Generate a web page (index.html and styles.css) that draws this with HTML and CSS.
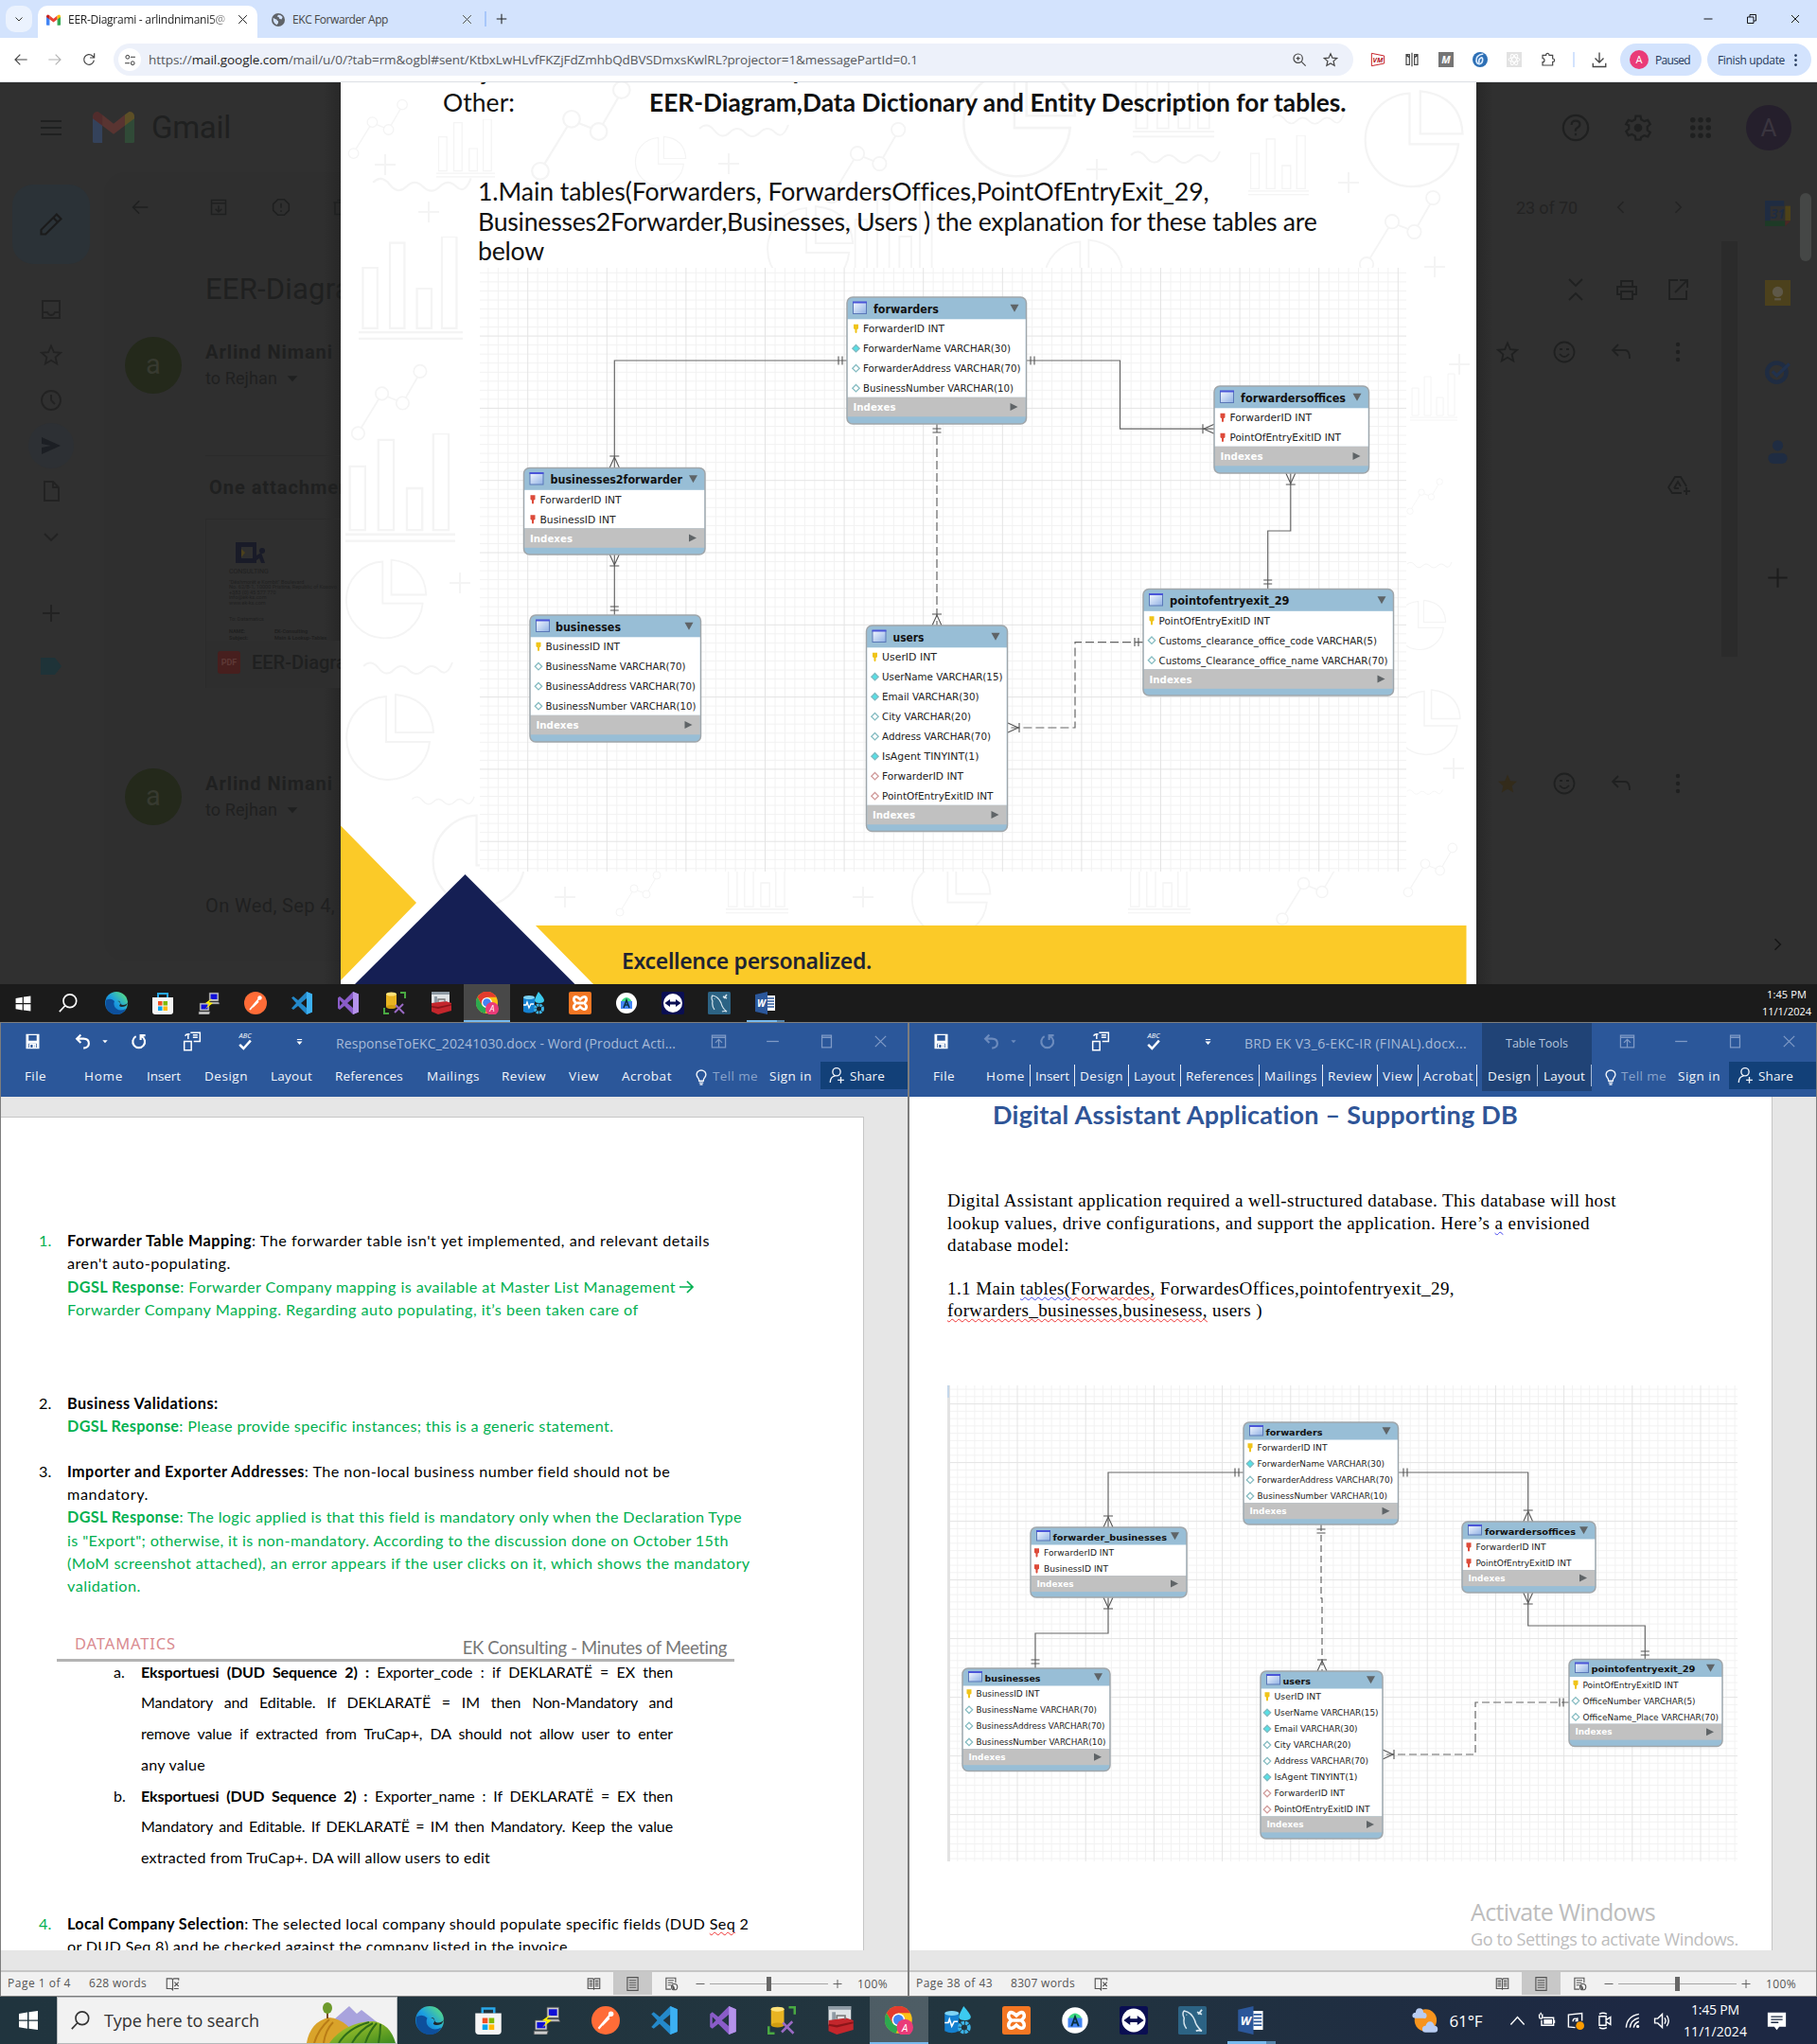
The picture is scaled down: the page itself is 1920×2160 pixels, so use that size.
FILE: index.html
```html
<!DOCTYPE html>
<html lang="en">
<head>
<meta charset="utf-8">
<title>Desktop</title>
<link rel="stylesheet" href="styles.css">
</head>
<body>
<svg class="grads" aria-hidden="true"><defs>
<linearGradient id="gEdge" x1="0" y1="1" x2="1" y2="0"><stop offset="0" stop-color="#0c59a4"/><stop offset=".5" stop-color="#1b9de2"/><stop offset="1" stop-color="#66eb6e"/></linearGradient>
<linearGradient id="gCell" x1="0" y1="0" x2="1" y2="1"><stop offset="0" stop-color="#f4f8ff"/><stop offset="1" stop-color="#8fb0e4"/></linearGradient>
<linearGradient id="gHill" x1="0" y1="0" x2="1" y2="1"><stop offset="0" stop-color="#b9cf2f"/><stop offset="1" stop-color="#3a8a1e"/></linearGradient>
</defs></svg>
<svg class="defs" aria-hidden="true">
<symbol id="gm" viewBox="0 0 24 18"><path fill="#4285f4" d="M0 2v15q0 1 1 1h4.500V7z"/><path fill="#34a853" d="M24 2v15q0 1-1 1h-4.500V7z"/><path fill="#ea4335" d="M5.500 8V1.800L12 7l6.500-5.200V8L12 13z"/><path fill="#c5221f" d="M0 3q0-3 3-3l2.500 1.800V8L0 4z"/><path fill="#fbbc04" d="M24 3q0-3-3-3l-2.500 1.800V8L24 4z"/></symbol>
<symbol id="x" viewBox="0 0 24 24"><path d="M4 4l16 16M20 4L4 20" class="l"/></symbol>
<symbol id="down" viewBox="0 0 24 24"><path d="M5 9l7 7 7-7" class="l"/></symbol>
<symbol id="up" viewBox="0 0 24 24"><path d="M3 17l9-10 9 10" class="l"/></symbol>
<symbol id="left" viewBox="0 0 24 24"><path d="M15 5l-7 7 7 7" class="l"/></symbol>
<symbol id="right" viewBox="0 0 24 24"><path d="M9 5l7 7-7 7" class="l"/></symbol>
<symbol id="plus" viewBox="0 0 24 24"><path d="M12 3v18M3 12h18" class="l"/></symbol>
<symbol id="minus" viewBox="0 0 24 24"><path d="M3 12h18" class="l"/></symbol>
<symbol id="globe" viewBox="0 0 24 24"><circle cx="12" cy="12" r="12" fill="#5f6368"/><path fill="#d3e3fd" d="M3 8q3 3 6 3 1 3 3 3v4q-2 1-2 3-6-2-7-8zM12 3q4-1 8 4l-2 4-4-1-1-3-3-1z"/></symbol>
<symbol id="restore" viewBox="0 0 24 24"><path d="M3 8h13v13H3zM8 8V3h13v13h-5" class="l"/></symbol>
<symbol id="back" viewBox="0 0 24 24"><path d="M22 12H3M11 4l-8 8 8 8" class="l"/></symbol>
<symbol id="fwd" viewBox="0 0 24 24"><path d="M2 12h19M13 4l8 8-8 8" class="l"/></symbol>
<symbol id="reload" viewBox="0 0 24 24"><path d="M20 13a8 8 0 1 1-2.500-7L20 8.500M20.500 2v7h-7" class="l"/></symbol>
<symbol id="tune" viewBox="0 0 24 24"><circle cx="7" cy="6" r="3.500" class="l"/><path d="M13 6h9M2 18h9" class="l"/><circle cx="17" cy="18" r="3.500" class="l"/></symbol>
<symbol id="mag" viewBox="0 0 24 24"><circle cx="10" cy="10" r="7" class="l"/><path d="M15.500 15.500L22 22M7 10h6M10 7v6" class="l"/></symbol>
<symbol id="star" viewBox="0 0 24 24"><path d="M12 2.500l2.900 6.700 7.100.6-5.400 4.700 1.600 7L12 17.800 5.800 21.500l1.600-7L2 9.800l7.100-.6z" class="l"/></symbol>
<symbol id="starf" viewBox="0 0 24 24"><path d="M12 2.500l2.900 6.700 7.100.6-5.400 4.700 1.600 7L12 17.800 5.800 21.500l1.600-7L2 9.800l7.100-.6z" fill="currentColor"/></symbol>
<symbol id="vm" viewBox="0 0 24 24"><path d="M2 2l20 4v12L2 22z" fill="#fff" stroke="#c8242b" stroke-width="1.500"/><text x="12" y="16" class="b" font-size="11" text-anchor="middle" fill="#b3141b">VM</text></symbol>
<symbol id="mirror" viewBox="0 0 24 24"><path d="M3 4h5v16H3zM16 4h5v16h-5zM12 1v22M3 4l5 5M21 4l-5 5" class="l"/></symbol>
<symbol id="mbox" viewBox="0 0 24 24"><path fill="#757575" d="M0 0h24v24H0z"/><text x="12" y="18" class="b" font-size="16" text-anchor="middle" fill="#fff">M</text></symbol>
<symbol id="swirl" viewBox="0 0 24 24"><circle cx="12" cy="12" r="12" fill="#2d6fb5"/><path d="M17 3q-12 2-11 11 1 5 5 5 5-1 5-7t-5-1q-2 4 0 6" fill="none" stroke="#dcecff" stroke-width="2.500"/></symbol>
<symbol id="react" viewBox="0 0 24 24"><path fill="#e2e2e2" d="M0 0h24v24H0z"/><g fill="none" stroke="#fff" stroke-width="1.500"><ellipse cx="12" cy="12" rx="9" ry="3.500"/><ellipse cx="12" cy="12" rx="9" ry="3.500" transform="rotate(60 12 12)"/><ellipse cx="12" cy="12" rx="9" ry="3.500" transform="rotate(120 12 12)"/></g></symbol>
<symbol id="puzzle" viewBox="0 0 24 24"><path d="M3 5h5.500q0-3 2.500-3t2.500 3H19v5.500q3 0 3 2.500t-3 2.500V21H3v-5q3 0 3-3t-3-3z" class="l"/></symbol>
<symbol id="dl" viewBox="0 0 24 24"><path d="M12 2v13M6 10l6 6 6-6M3 17v5h18v-5" class="l"/></symbol>
<symbol id="dots" viewBox="0 0 24 24"><g fill="currentColor"><circle cx="12" cy="4" r="2.200"/><circle cx="12" cy="12" r="2.200"/><circle cx="12" cy="20" r="2.200"/></g></symbol>
<symbol id="burger" viewBox="0 0 24 24"><path d="M1 5h22M1 12h22M1 19h22" class="l"/></symbol>
<symbol id="pencil" viewBox="0 0 24 24"><path d="M3 21v-4L17 3l4 4L7 21zM14 6l4 4" class="l"/></symbol>
<symbol id="archive" viewBox="0 0 24 24"><path d="M3 3h18v18H3zM3 7h18M12 10v8M8 14l4 4 4-4" class="l"/></symbol>
<symbol id="spam" viewBox="0 0 24 24"><path d="M8 2h8l6 6v8l-6 6H8l-6-6V8zM12 7v6M12 16v2" class="l"/></symbol>
<symbol id="trash" viewBox="0 0 24 24"><path d="M4 6h16M6 6v15h12V6M9 3h6" class="l"/></symbol>
<symbol id="inbox" viewBox="0 0 24 24"><path d="M3 3h18v18H3zM3 15h5q1 3 4 3t4-3h5" class="l"/></symbol>
<symbol id="clock" viewBox="0 0 24 24"><circle cx="12" cy="12" r="10" class="l"/><path d="M12 6v6l4 4" class="l"/></symbol>
<symbol id="send" viewBox="0 0 24 24"><path fill="currentColor" d="M2 3l20 9L2 21v-7l10-2-10-2z"/></symbol>
<symbol id="doc" viewBox="0 0 24 24"><path d="M5 2h9l6 6v14H5zM14 2v6h6" class="l"/></symbol>
<symbol id="label" viewBox="0 0 24 24"><path fill="currentColor" d="M1 3h15l7 9-7 9H1z"/></symbol>
<symbol id="help" viewBox="0 0 24 24"><circle cx="12" cy="12" r="10.500" class="l"/><path d="M8.500 9.500q0-3.500 3.500-3.500t3.500 3q0 2-2 3t-1.500 3M12 16.500v2" class="l"/></symbol>
<symbol id="gear" viewBox="0 0 24 24"><path d="M10 2h4l.6 3 2.600 1.500 3-1 2 3.500-2.400 2v3l2.400 2-2 3.500-3-1-2.600 1.500L14 22h-4l-.6-3-2.600-1.500-3 1-2-3.500 2.400-2v-3L1.800 9l2-3.500 3 1L9.400 5z" class="l"/><circle cx="12" cy="12" r="3.500" fill="currentColor"/></symbol>
<symbol id="apps" viewBox="0 0 24 24"><g fill="currentColor"><circle cx="3" cy="3" r="3"/><circle cx="12" cy="3" r="3"/><circle cx="21" cy="3" r="3"/><circle cx="3" cy="12" r="3"/><circle cx="12" cy="12" r="3"/><circle cx="21" cy="12" r="3"/><circle cx="3" cy="21" r="3"/><circle cx="12" cy="21" r="3"/><circle cx="21" cy="21" r="3"/></g></symbol>
<symbol id="collapse" viewBox="0 0 24 24"><path d="M5 1l7 7 7-7M5 23l7-7 7 7" class="l"/></symbol>
<symbol id="print" viewBox="0 0 24 24"><path d="M6 8V3h12v5M6 17H2V9h20v8h-4M6 14h12v8H6z" class="l"/></symbol>
<symbol id="open" viewBox="0 0 24 24"><path d="M12 2H3v20h18v-9M14 2h8v8M22 2L9 15" class="l"/></symbol>
<symbol id="smile" viewBox="0 0 24 24"><circle cx="12" cy="12" r="10.500" class="l"/><path d="M7 14q5 6 10 0M7 9h3M14 9h3" class="l"/></symbol>
<symbol id="reply" viewBox="0 0 24 24"><path d="M9 4L3 10l6 6M3 10h13q5 0 5 9" class="l"/></symbol>
<symbol id="drive" viewBox="0 0 24 24"><path d="M15 20H5l-4-6L8 3h6l6 10M7 15l4-7 3 5M7 15h5M17 18h7M20 14v8" class="l"/></symbol>
<symbol id="cal" viewBox="0 0 24 24"><path fill="#1f2c42" d="M0 0h18v5H5v14H0z"/><path fill="#4e4218" d="M19 5h5v14h-5z"/><path fill="#1d3a26" d="M0 19h19v5H0z"/><path fill="#4c2724" d="M19 19h5l-5 5z"/><text x="12" y="16.500" class="b" font-size="12" text-anchor="middle" fill="#1f2c42">31</text></symbol>
<symbol id="keep" viewBox="0 0 24 24"><path fill="#4c411c" d="M0 0h24v24H0z"/><circle cx="12" cy="11" r="5" fill="#5e5848"/><path fill="#5e5848" d="M9 17h6v2H9z"/></symbol>
<symbol id="tasks" viewBox="0 0 24 24"><circle cx="11" cy="12" r="9" fill="none" stroke="#1f2c42" stroke-width="4"/><path d="M7 11l4 4L23 4" fill="none" stroke="#21324e" stroke-width="3"/></symbol>
<symbol id="contacts" viewBox="0 0 24 24"><g fill="#1f2c42"><circle cx="12" cy="6" r="5"/><rect x="3" y="13" width="18" height="10" rx="5"/></g></symbol>
<symbol id="win" viewBox="0 0 24 24"><path fill="#fff" d="M2 5l9-1.500V11.500H2zM12.500 3.300L22 2v9.500h-9.500zM2 12.800h9v8L2 19.300zM12.500 12.800H22V22l-9.500-1.300z"/></symbol>
<symbol id="search" viewBox="0 0 24 24"><circle cx="14" cy="9.500" r="7.500" class="l"/><path d="M8.500 15L2 22" class="l"/></symbol>
<symbol id="edge" viewBox="0 0 24 24"><circle cx="12" cy="12" r="12" fill="url(#gEdge)"/><path fill="#0d4f9c" d="M1 9q-2 12 9 15 8 1 12-6-6 3-10 0-4-3-2-8-4-4-9-1z"/><path fill="#20262a" d="M13 10q3 0 3 3l-1 2q2 2 7 0 2-2 2-4-1 3-5 3-3 0-3-3-1-2-3-1z"/></symbol>
<symbol id="store" viewBox="0 0 24 24"><path d="M7 6V2h10v4" fill="none" stroke="#28a8ea" stroke-width="2"/><path fill="#f5f5f5" d="M1 6h22v15q0 3-3 3H4q-3 0-3-3z"/><path fill="#f25022" d="M7 10h4.500v4.500H7z"/><path fill="#7fba00" d="M12.500 10H17v4.500h-4.500z"/><path fill="#00a4ef" d="M7 15.500h4.500V20H7z"/><path fill="#ffb900" d="M12.500 15.500H17V20h-4.500z"/></symbol>
<symbol id="putty" viewBox="0 0 24 24"><g stroke="#555" stroke-width=".6"><path fill="#ccc" d="M12 1h10v9H12zM13 11h9l1 2H12zM2 12h10v8H2zM1 21h12l-1 3H1z"/></g><path fill="#1010d8" d="M13.500 2.500h7v5.500h-7zM3.500 13.500h7v5h-7z"/><path fill="#ffee00" d="M15 7l-7 5 4 1-4 5 8-6-4-1z"/></symbol>
<symbol id="postman" viewBox="0 0 24 24"><circle cx="12" cy="12" r="12" fill="#ff6c37"/><path d="M6 19l10-12M9 16l6-6" stroke="#fff" stroke-width="1.800" fill="none"/><circle cx="16.500" cy="6.500" r="2.200" fill="#fff"/></symbol>
<symbol id="vscode" viewBox="0 0 24 24"><path fill="#2489ca" d="M17 0l6 2.500v19L17 24l-9-9-5 4-2-1.500 5-5.500-5-5.500L3 5l5 4zM17 7l-6 5 6 5z"/><path fill="#3cb0f2" d="M17 0l6 2.500v19L17 24z"/></symbol>
<symbol id="vs" viewBox="0 0 24 24"><path fill="#8a5cc8" fill-rule="evenodd" d="M17 0l6 2.500v19L17 24 8 15l-5 4-2-1.500v-11L3 5l5 4zM17 7l-6 5 6 5zM3 9v6l3-3z"/><path fill="#b593ea" d="M17 0l6 2.500v19L17 24z"/></symbol>
<symbol id="sql" viewBox="0 0 24 24"><path fill="#e8b422" d="M3 2h11v14H3z"/><ellipse cx="8.500" cy="16" rx="5.500" ry="2" fill="#d19d10"/><ellipse cx="8.500" cy="2.500" rx="5.500" ry="2" fill="#ffe27a"/><path d="M18 1h5v6M1 17v6h5" fill="none" stroke="#49a942" stroke-width="2"/><path d="M12 22l9-9M13 14l9 9" stroke="#9a6ac4" stroke-width="2"/></symbol>
<symbol id="tbox" viewBox="0 0 24 24"><path fill="#dfe3e6" d="M2 0h19v16H2z"/><path fill="#8e9aa4" d="M2 0h19v3H2zM5 5h3v9H5z"/><path fill="#c4262c" d="M2 12l15-2 6 2v8l-14 4-7-3z"/><path fill="#8b1519" d="M2 15l7 1 14-3v1.500L9 18l-7-1.500z"/><path d="M9 11V8h7v3" fill="none" stroke="#777" stroke-width="1.300"/></symbol>
<symbol id="chrome" viewBox="0 0 24 24"><circle cx="11.500" cy="11.500" r="11.500" fill="#fbc116"/><path fill="#e33b2e" d="M1.500 5.700A11.500 11.500 0 0 1 21.500 5.700H11.500l-5 8.600z"/><path fill="#2da94f" d="M1.500 5.700L6.500 14.500l5 2.500-2 6A11.500 11.500 0 0 1 1.500 5.700z"/><circle cx="11.500" cy="11.500" r="5.500" fill="#fff"/><circle cx="11.500" cy="11.500" r="4.300" fill="#4285f4"/><circle cx="17" cy="18" r="7" fill="#ea3b78"/><text x="17" y="21.300" font-size="9" class="s" text-anchor="middle" fill="#fff">A</text></symbol>
<symbol id="azure" viewBox="0 0 24 24"><path fill="#1480d0" d="M1 6h12v15q-6 3-12 0z"/><ellipse cx="7" cy="6" rx="6" ry="2" fill="#7fd4f5"/><path fill="#3ccbf0" d="M17 0q6 7 6 9 0 3-5 3t-5-3q0-2 4-9z"/><path d="M1 14h3l1-3 2 6 2-4h3" stroke="#fff" fill="none" stroke-width="1.300"/><circle cx="17.500" cy="18" r="4" fill="none" stroke="#3cb4e8" stroke-width="3" stroke-dasharray="2.500 .7"/></symbol>
<symbol id="xampp" viewBox="0 0 24 24"><rect width="24" height="24" rx="2" fill="#f37623"/><path d="M12 8Q8 4 6 6q-2 3 2 6-4 3-2 6 2 2 6-2 4 4 6 2 2-3-2-6 4-3 2-6-2-2-6 2zM9 12h6" fill="none" stroke="#fff" stroke-width="2.800"/></symbol>
<symbol id="astudio" viewBox="0 0 24 24"><circle cx="12" cy="12" r="11" fill="#fff"/><path fill="#3ddc84" d="M7 9q5-6 10 0v4H7z"/><path fill="#4285f4" d="M6 10h12v8H6z"/><path d="M9 17l3-8 3 8M10 14h4" stroke="#083042" stroke-width="1.500" fill="none"/></symbol>
<symbol id="tv" viewBox="0 0 24 24"><rect width="24" height="24" rx="2" fill="#0a0e52"/><circle cx="12" cy="12" r="10" fill="#fff"/><path fill="#0a0e52" d="M3.500 12L9 8v2.500h6V8l5.500 4L15 16v-2.500H9V16z"/></symbol>
<symbol id="mysql" viewBox="0 0 24 24"><rect width="24" height="24" rx="1.500" fill="#2c6384"/><path d="M7 19Q4 15 5 10 3 6 5 4q6 1 9 8 1 5 6 9-3-1-5 0M7 7v.5" stroke="#d8e6ee" stroke-width="1.200" fill="none"/><path d="M17 7l3-4M20 7l-4-2" stroke="#d8e6ee" stroke-width="1.500"/></symbol>
<symbol id="word" viewBox="0 0 24 24"><path fill="#fff" d="M12 4h10v16H12z"/><path d="M14 7h7M14 10h7M14 13h7M14 16h7" stroke="#2b579a" stroke-width="1.400"/><path fill="#2b579a" d="M1 3l13-3v24L1 21z"/><text x="7.500" y="16" font-size="10" class="b" text-anchor="middle" fill="#fff">W</text></symbol>
<symbol id="save" viewBox="0 0 24 24"><path d="M3 2h18v20H3zM5 12h14M8 22v-6h8v6" class="l"/><path fill="currentColor" d="M3 12h18v3H3zM3 2h3v20H3zM18 2h3v20h-3zM12 17h3v5h-3z"/></symbol>
<symbol id="undo" viewBox="0 0 24 24"><path d="M9 2L3 8l6 6M3 8h10q8 0 8 7 0 6-8 7" class="l h"/></symbol>
<symbol id="redo" viewBox="0 0 24 24"><path d="M8 4.500A9 9 0 1 0 16.500 4.500M22 3h-7v7" class="l h"/></symbol>
<symbol id="tri" viewBox="0 0 24 24"><path fill="currentColor" d="M4 8h16l-8 9z"/></symbol>
<symbol id="trib" viewBox="0 0 24 24"><path fill="currentColor" d="M4 12h16l-8 9zM5 5h14v3H5z"/></symbol>
<symbol id="paint" viewBox="0 0 24 24"><path d="M2 12h9v11H2zM10 1h12v11h-8M13 4h6M13 7h6M3 5q2-3 6-2M7 4v5" class="l"/></symbol>
<symbol id="abc" viewBox="0 0 24 24"><text x="12" y="8" class="s" font-size="9" text-anchor="middle" fill="currentColor">ABC</text><path d="M5 16l5 5 9-10" fill="none" stroke="currentColor" stroke-width="3"/></symbol>
<symbol id="ribbon" viewBox="0 0 24 24"><path d="M2 3h20v18H2zM2 6h20M12 20V10M7 14l5-5 5 5" class="l"/></symbol>
<symbol id="max" viewBox="0 0 24 24"><path d="M5 3h14v18H5zM5 6h14" class="l"/></symbol>
<symbol id="bulb" viewBox="0 0 24 24"><path d="M9 17q0-3-2-5-3-4 0-8 5-4 10 0 3 4 0 8-2 2-2 5zM9 19.500h6M10 22h4" class="l"/></symbol>
<symbol id="person" viewBox="0 0 24 24"><circle cx="12" cy="7" r="5.500" class="l"/><path d="M3 22q0-8 7-9.500M18 14v9M13.500 18.500h9" class="l"/></symbol>
<symbol id="book" viewBox="0 0 24 24"><path d="M12 4v18l-2-2H2V3h8zM12 4l2-1h8v3M14 20h8M15 9l7 7M22 9l-7 7" class="l"/></symbol>
<symbol id="read" viewBox="0 0 24 24"><path d="M12 4v18M2 3h8l2 1 2-1h8v17H2zM4 7h6M4 10h6M4 13h6M4 16h6M14 7h6M14 10h6M14 13h6M14 16h6" class="l"/></symbol>
<symbol id="page" viewBox="0 0 24 24"><path d="M3 1h18v22H3zM6 6h12M6 10h12M6 14h12M6 18h12" class="l"/></symbol>
<symbol id="web" viewBox="0 0 24 24"><path d="M11 21H3V2h16v8M6 6h10M6 10h9M6 14h5" class="l"/><circle cx="17" cy="17" r="5" class="l"/><path fill="currentColor" d="M13 14q4 0 5 8-5 1-5-8z"/></symbol>
<symbol id="weather" viewBox="0 0 24 24"><circle cx="13" cy="12" r="10" fill="#f7941d"/><path fill="#b9cdf2" d="M1 8q0-3 3-3 0-4 3.500-4T11 5q3 0 3 3t-3 2H4Q1 10 1 8zM10 20q0-3 3-3 1-4 4-4t4 4q3 0 3 3t-3 3h-8q-3 0-3-3z"/></symbol>
<symbol id="plug" viewBox="0 0 24 24"><path d="M7 8h14v10H5v-7M2 3v4q0 2 2 2t2-2V3M4 1v3" class="l"/><path fill="currentColor" d="M8 10h11v6H8zM21 11h2v4h-2z"/></symbol>
<symbol id="upd" viewBox="0 0 24 24"><path d="M21 12V2L3 4v16l9 1M9 13q0-4 3-4t3 3M15 8v4h-3" class="l"/><circle cx="18.500" cy="18.500" r="5.500" fill="#ff9c00"/></symbol>
<symbol id="cam" viewBox="0 0 24 24"><path d="M5 6h9v12H5zM14 11l6-4v10l-6-4M5 3q5-3 10 0M5 21q5 3 10 0" class="l"/></symbol>
<symbol id="wifi" viewBox="0 0 24 24"><path d="M3 21Q4 6 20 3M8 21q1-10 12-13M13 21q1-6 7-8" class="l"/><circle cx="18.500" cy="19.500" r="2" fill="currentColor"/></symbol>
<symbol id="snd" viewBox="0 0 24 24"><path d="M2 9h4l6-6v18l-6-6H2zM15 8q3 4 0 8M18 5q5 7 0 14" class="l"/></symbol>
<symbol id="note" viewBox="0 0 24 24"><path fill="#fff" d="M1 2h22v17h-8l-3 4-3-4H1z"/><path d="M5 7h14M5 10.500h14M5 14h9" stroke="#1d2b43" stroke-width="1.500"/></symbol>
<symbol id="dPie" viewBox="0 0 100 100"><path d="M46 6a44 44 0 1 0 46 48H46zM56 4v40h40Q94 8 56 4z"/></symbol>
<symbol id="dBars" viewBox="0 0 100 100"><path d="M4 88V30h14v58zM30 88V6h14v82zM56 88V50h14v38zM80 88V0h14v88zM0 98h100M0 92h100"/></symbol>
<symbol id="dWave" viewBox="0 0 100 20"><path d="M2 8q8-8 16 2t16 2 16 0 16 0 16 0 14-8"/></symbol>
<symbol id="dPlus" viewBox="0 0 24 24"><path d="M12 1v22M1 12h22"/></symbol>
<symbol id="dGraph" viewBox="0 0 100 100"><circle cx="10" cy="88" r="8"/><circle cx="40" cy="38" r="8"/><circle cx="66" cy="50" r="8"/><circle cx="88" cy="10" r="8"/><path d="M14 81l22-36M47 42l13 5M70 43l15-26"/></symbol>
</svg>

<section class="screen">
  <header class="tabs s">
    <span class="tablist"><i data-icon="down"></i></span>
    <div class="tab active"><i data-icon="gm" class="gmicon"></i><span class="tabname fade" data-w="166">EER-Diagrami - arlindnimani5@</span><i data-icon="x" class="close"></i></div>
    <div class="tab"><i data-icon="globe" class="globe"></i><span class="tabname" data-w="101">EKC Forwarder App</span><i data-icon="x" class="close"></i></div>
    <span class="tabsep"></span><i data-icon="plus" class="newtab"></i>
    <div class="winctl"><i data-icon="minus"></i><i data-icon="restore"></i><i data-icon="x"></i></div>
  </header>
  <div class="toolbar s">
    <div class="nav"><i data-icon="back"></i><i data-icon="fwd" class="off"></i><i data-icon="reload"></i></div>
    <div class="omni"><span class="site"><i data-icon="tune"></i></span><span class="url" data-w="813"><b>https://</b>mail.google.com<b>/mail/u/0/?tab=rm&amp;ogbl#sent/KtbxLwHLvfFKZjFdZmhbQdBVSDmxsKwlRL?projector=1&amp;messagePartId=0.1</b></span><i data-icon="mag"></i><i data-icon="star"></i></div>
    <div class="exts"><i data-icon="vm"></i><i data-icon="mirror"></i><i data-icon="mbox"></i><i data-icon="swirl"></i><i data-icon="react"></i><i data-icon="puzzle"></i></div>
    <span class="tsep"></span><i data-icon="dl" class="dl"></i>
    <span class="pill paused"><span class="pa">A</span><span data-w="37">Paused</span></span>
    <span class="pill finish"><span data-w="71">Finish update</span><i data-icon="dots"></i></span>
  </div>
  <main class="view">
    <aside class="mail">
      <div class="mhead"><i data-icon="burger"></i><i data-icon="gm" class="logo"></i><span class="gname" data-w="84">Gmail</span></div>
      <div class="mbody">
        <nav class="rail"><span class="compose"><i data-icon="pencil"></i></span>
          <i data-icon="inbox"></i><i data-icon="star"></i><i data-icon="clock"></i><i data-icon="send" class="sent"></i><i data-icon="doc"></i><i data-icon="down"></i><i data-icon="plus" class="more"></i><i data-icon="label" class="lab"></i></nav>
        <article class="card">
          <div class="acts"><i data-icon="back"></i><i data-icon="archive"></i><i data-icon="spam"></i><i data-icon="trash"></i></div>
          <h1>EER-Diagrami</h1>
          <div class="from"><span class="av">a</span><div><b data-w="135">Arlind Nimani</b><p><span data-w="76">to Rejhan</span> <i data-icon="tri"></i></p></div></div>
          <div class="att"><h2 data-w="157">One attachment</h2>
            <div class="thumb"><div class="tpage"><svg class="ek" viewBox="0 0 31 23"><path d="M0 0h18v5H6v12h12v5H0zM18 0h4v22h-4z" fill="#191b28"/><path d="M6 7l4 4-4 5z" fill="#4c411c"/><path d="M22 14l5-3 4 11h-4l-2-5-3 2z" fill="#191b28"/><circle cx="28" cy="9" r="3" fill="#191b28"/></svg><b>CONSULTING</b><p>"Dëshmorët e Kombit" Boulevard<br>No. 62/B-1, 10000 Pristina, Republic of Kosovo<br>+383 (0) 45 577 770<br>info@ek-ks.com<br>www.ek-ks.com</p><p class="to">To: Datamatics</p><p class="nm"><span>NAME:</span><span>EK-Consulting</span><span>Subject:</span><span>Main &amp; Lookup-Tables</span></p></div>
            <div class="file"><span>PDF</span>EER-Diagrami</div></div></div>
          <div class="from second"><span class="av">a</span><div><b data-w="135">Arlind Nimani</b><p><span data-w="76">to Rejhan</span> <i data-icon="tri"></i></p></div></div>
          <p class="quote"><span data-w="189">On Wed, Sep 4, 2024</span></p>
        </article>
      </div>
    </aside>
    <section class="sheet">
      <svg class="art" width="1200" height="953" viewBox="360 87 1200 953">
        <g id="doodles" fill="none" stroke="#f4f4f4" stroke-width="2"></g>
        <path fill="#fbca28" d="M360 872.500L440 954 360 1036zM566 978H1549.500V1040H627z"/><path fill="#151f54" d="M491.500 924L607.500 1040H375z"/>
      </svg>
      <div class="ptext"><p class="row"><span data-w="86">Subject:</span><b data-w="240">Main &amp; Lookup-Tables</b></p>
        <p class="row last"><span data-w="76">Other:</span><b data-w="738">EER-Diagram,Data Dictionary and Entity Description for tables.</b></p>
        <div class="intro"><p data-w="771">1.Main tables(Forwarders, ForwardersOffices,PointOfEntryExit_29,</p><p data-w="887">Businesses2Forwarder,Businesses, Users ) the explanation for these tables are</p><p data-w="70">below</p></div>
      </div>
      <svg class="er" id="er1" width="979" height="638" viewBox="507 283 979 638"></svg>
      <p class="slogan" data-w="264">Excellence personalized.</p>
    </section>
    <aside class="side">
      <div class="stop"><i data-icon="help"></i><i data-icon="gear"></i><i data-icon="apps"></i><span>A</span></div>
      <div class="sgrid">
        <div class="smain">
          <div class="r1"><span data-w="65">23 of 70</span><i data-icon="left"></i><i data-icon="right"></i></div>
          <div class="r2"><i data-icon="collapse"></i><i data-icon="print"></i><i data-icon="open"></i></div>
          <div class="r3"><i data-icon="star"></i><i data-icon="smile"></i><i data-icon="reply"></i><i data-icon="dots"></i></div>
          <div class="r4"><i data-icon="drive"></i></div>
          <div class="r3 low"><i data-icon="starf" class="gold"></i><i data-icon="smile"></i><i data-icon="reply"></i><i data-icon="dots"></i></div>
        </div>
        <span class="sbar"></span>
        <div class="apps"><i data-icon="cal"></i><i data-icon="keep"></i><i data-icon="tasks"></i><i data-icon="contacts"></i><i data-icon="plus" class="ap"></i><i data-icon="right" class="ar"></i></div>
        <span class="thumbbar"></span>
      </div>
    </aside>
  </main>
  <footer class="task t1 s"><span><i data-icon="win"></i></span><span><i data-icon="search"></i></span><span class="run"></span><div class="clk"><p data-w="42">1:45 PM</p><p data-w="52">11/1/2024</p></div></footer>
</section>

<section class="words">
  <article class="window s">
    <div class="wtitle"><i data-icon="save"></i><i data-icon="undo"></i><i data-icon="tri" class="sm"></i><i data-icon="redo"></i><i data-icon="paint" class="big"></i><i data-icon="abc" class="big"></i><i data-icon="trib" class="sm"></i><span class="name" data-w="359">ResponseToEKC_20241030.docx - Word (Product Acti...</span><span></span><i data-icon="ribbon" class="dim"></i><i data-icon="minus" class="dim"></i><i data-icon="max" class="dim"></i><i data-icon="x" class="dim"></i></div>
    <div class="wtabs one"><span data-w="23">File</span><span data-w="41">Home</span><span data-w="36">Insert</span><span data-w="46">Design</span><span data-w="44">Layout</span><span data-w="72">References</span><span data-w="56">Mailings</span><span data-w="47">Review</span><span data-w="32">View</span><span data-w="53">Acrobat</span><i data-icon="bulb"></i><span class="dim" data-w="48">Tell me</span><span data-w="45">Sign in</span><div class="share"><i data-icon="person"></i><span data-w="37">Share</span></div></div>
    <div class="wdoc gap"><div class="paper left">
      <div class="it first"><span class="g">1.</span><div><p data-w="679"><b>Forwarder Table Mapping</b>: The forwarder table isn't yet implemented, and relevant details</p><p data-w="173">aren't auto-populating.</p><p class="g"><span data-w="643"><b>DGSL Response</b>: Forwarder Company mapping is available at Master List Management</span> <svg class="arrow" viewBox="0 0 16 14"><path d="M0 7h14M8 1l6 6-6 6" fill="none" stroke="#00b050" stroke-width="1.700"/></svg></p><p class="g" data-w="604">Forwarder Company Mapping. Regarding auto populating, it’s been taken care of</p></div></div>
      <div class="it second"><span>2.</span><div><p data-w="160"><b>Business Validations:</b></p><p class="g" data-w="577"><b>DGSL Response</b>: Please provide specific instances; this is a generic statement.</p></div></div>
      <div class="it third"><span>3.</span><div><p data-w="637"><b>Importer and Exporter Addresses</b>: The non-local business number field should not be</p><p data-w="86">mandatory.</p><p class="g" data-w="713"><b>DGSL Response</b>: The logic applied is that this field is mandatory only when the Declaration Type</p><p class="g" data-w="699">is "Export"; otherwise, it is non-mandatory. According to the discussion done on October 15th</p><p class="g" data-w="721">(MoM screenshot attached), an error appears if the user clicks on it, which shows the mandatory</p><p class="g" data-w="78">validation.</p></div></div>
      <div class="mom"><span class="dm" data-w="107">DATAMATICS</span><span class="ekc" data-w="280">EK Consulting - Minutes of Meeting</span></div>
      <div class="sub"><span>a.</span><div><p class="j"><b>Eksportuesi (DUD Sequence 2) :</b> Exporter_code : if DEKLARATË = EX then</p><p class="j">Mandatory and Editable. If DEKLARATË = IM then Non-Mandatory and</p><p class="j">remove value if extracted from TruCap+, DA should not allow user to enter</p><p data-w="68">any value</p></div><span>b.</span><div><p class="j"><b>Eksportuesi (DUD Sequence 2) :</b> Exporter_name : If DEKLARATË = EX then</p><p class="j">Mandatory and Editable. If DEKLARATË = IM then Mandatory. Keep the value</p><p data-w="369">extracted from TruCap+. DA will allow users to edit</p></div></div>
      <div class="it fourth"><span class="g">4.</span><div><p data-w="720"><b>Local Company Selection</b>: The selected local company should populate specific fields (DUD <u class="sq">Seq</u> 2</p><p data-w="533">or DUD Seq 8) and be checked against the company listed in the invoice.</p></div></div>
    </div></div>
    <div class="status"><span data-w="67">Page 1 of 4</span><span data-w="61">628 words</span><i data-icon="book"></i><div class="views"><i data-icon="read"></i><i data-icon="page" class="on"></i><i data-icon="web"></i><i data-icon="minus" class="zm"></i><span class="slider"></span><i data-icon="plus" class="zm"></i><span class="pc" data-w="32">100%</span></div></div>
  </article>
  <article class="window s">
    <div class="wtitle"><i data-icon="save"></i><i data-icon="undo" class="faint"></i><i data-icon="tri" class="sm faint"></i><i data-icon="redo" class="faint"></i><i data-icon="paint" class="big"></i><i data-icon="abc" class="big"></i><i data-icon="trib" class="sm"></i><span class="name" data-w="235">BRD EK V3_6-EKC-IR (FINAL).docx...</span><span class="tt"><span data-w="66">Table Tools</span></span><i data-icon="ribbon" class="dim"></i><i data-icon="minus" class="dim"></i><i data-icon="max" class="dim"></i><i data-icon="x" class="dim"></i></div>
    <div class="wtabs two"><span data-w="23">File</span><span data-w="41">Home</span><span data-w="36">Insert</span><span data-w="46">Design</span><span data-w="44">Layout</span><span data-w="72">References</span><span data-w="56">Mailings</span><span data-w="47">Review</span><span data-w="32">View</span><span data-w="53">Acrobat</span><span class="tt2"><span data-w="46">Design</span></span><span class="tt2"><span data-w="44">Layout</span></span><i data-icon="bulb"></i><span class="dim" data-w="48">Tell me</span><span data-w="45">Sign in</span><div class="share"><i data-icon="person"></i><span data-w="37">Share</span></div></div>
    <div class="wdoc"><div class="paper right">
      <h3><span data-w="556">Digital Assistant Application – Supporting DB</span></h3>
      <div class="serif"><p data-w="707">Digital Assistant application required a well-structured database. This database will host</p><p data-w="679">lookup values, drive configurations, and support the application. Here’s <u class="sq bl">a</u> envisioned</p><p data-w="129">database model:</p><p class="sp" data-w="536">1.1 Main <u class="sq bl">tables(</u><u class="sq">Forwardes,</u> ForwardesOffices,pointofentryexit_29,</p><p data-w="333"><u class="sq">forwarders_businesses,businesess,</u> users )</p></div>
      <svg class="er2" id="er2" width="835" height="503" viewBox="1001 1464 835 503"></svg>
      <div class="act"><p data-w="195">Activate Windows</p><p data-w="283">Go to Settings to activate Windows.</p></div>
    </div></div>
    <div class="status"><span data-w="81">Page 38 of 43</span><span data-w="68">8307 words</span><i data-icon="book"></i><div class="views"><i data-icon="read"></i><i data-icon="page" class="on"></i><i data-icon="web"></i><i data-icon="minus" class="zm"></i><span class="slider"></span><i data-icon="plus" class="zm"></i><span class="pc" data-w="32">100%</span></div></div>
  </article>
</section>
<footer class="task t2 s"><span class="start"><i data-icon="win"></i></span><div class="find"><i data-icon="search"></i><span data-w="164">Type here to search</span>
<svg class="hill" viewBox="0 0 94 43"><path fill="#a9a3dd" d="M20 26L45 4l8 8 5-4 28 22z"/><path fill="#d9a32a" d="M0 43Q4 20 24 16q20 2 32 27z"/><path d="M8 43q4-14 16-25M18 43q2-14 10-22" stroke="#b97c16" stroke-width="2" fill="none"/><path fill="url(#gHill)" d="M24 43q16-22 46-23 18 2 24 23z"/><path d="M34 43q10-16 32-22M48 43q8-14 22-21M62 43q4-12 12-21M76 43q2-10 2-20" stroke="#2e6d18" stroke-width="2" fill="none"/><path d="M22 17V8" stroke="#7a4a1c" stroke-width="2"/><ellipse cx="22" cy="6" rx="5" ry="6" fill="#6d9a2b"/></svg></div><span class="run"></span>
<div class="tray"><i data-icon="weather" class="we"></i><span class="deg" data-w="35">61°F</span><i data-icon="up"></i><i data-icon="plug"></i><i data-icon="upd"></i><i data-icon="cam"></i><i data-icon="wifi"></i><i data-icon="snd"></i><div class="clk"><p data-w="51">1:45 PM</p><p data-w="67">11/1/2024</p></div><i data-icon="note" class="no"></i></div></footer>
<script src="app.js"></script>
</body>
</html>
```
FILE: app.js
```js
// Pinned and running applications, shown on both taskbars.
const apps = ['edge', 'store', 'putty', 'postman', 'vscode', 'vs', 'sql', 'tbox', 'chrome', 'azure', 'xampp', 'astudio', 'tv', 'mysql', 'word'];
document.querySelectorAll('.run').forEach(run => {
  run.innerHTML = apps.map(a => `<span class="app app-${a}"><i data-icon="${a}"></i></span>`).join('');
});

document.querySelectorAll('[data-icon]').forEach(el => {
  el.innerHTML = `<svg><use href="#${el.dataset.icon}"/></svg>`;
});

// Track a line of text so that it fills its measure.
document.querySelectorAll('[data-w]').forEach(el => {
  const range = document.createRange();
  range.selectNodeContents(el);
  const delta = Number(el.dataset.w) - range.getBoundingClientRect().width;
  el.style.letterSpacing = (delta / el.textContent.length).toFixed(3) + 'px';
});

// Background pattern of the letterhead: symbol, x, y, width, height.
const doodles = [
  ['Pie', 667, 142, 62, 58], ['Pie', 1012, 66, 130, 128], ['Pie', 1438, 92, 112, 112], ['Pie', 807, 213, 98, 100],
  ['Bars', 456, 126, 72, 62], ['Bars', 1318, 143, 66, 64], ['Bars', 1162, 60, 156, 86], ['Bars', 363, 250, 142, 110],
  ['Bars', 363, 458, 120, 116], ['Pie', 362, 584, 92, 100], ['Pie', 362, 725, 100, 110], ['Pie', 448, 855, 120, 110],
  ['Graph', 362, 104, 76, 66], ['Graph', 540, 84, 150, 110], ['Graph', 362, 384, 100, 84], ['Graph', 850, 128, 130, 90],
  ['Graph', 1430, 200, 100, 90], ['Wave', 392, 184, 110, 22], ['Wave', 735, 128, 104, 20], ['Wave', 1190, 156, 106, 20],
  ['Wave', 1340, 118, 86, 16], ['Wave', 378, 696, 108, 20], ['Wave', 434, 838, 70, 16], ['Plus', 395, 162, 24, 24],
  ['Plus', 441, 212, 24, 24], ['Plus', 758, 161, 24, 24], ['Plus', 1147, 167, 24, 24], ['Plus', 1413, 181, 24, 24],
  ['Plus', 1504, 270, 24, 24], ['Plus', 474, 604, 24, 24], ['Bars', 735, 900, 130, 66], ['Bars', 1160, 900, 130, 66],
  ['Plus', 585, 936, 24, 24], ['Plus', 900, 936, 24, 24], ['Graph', 650, 915, 50, 60], ['Bars', 1490, 350, 50, 140],
  ['Graph', 1486, 500, 40, 50], ['Plus', 1530, 373, 24, 24], ['Pie', 1468, 632, 66, 58], ['Pie', 1470, 716, 76, 96],
  ['Graph', 1482, 890, 60, 60], ['Pie', 960, 905, 90, 90], ['Bars', 900, 205, 90, 90], ['Pie', 1100, 250, 90, 90],
  ['Plus', 1524, 800, 24, 24], ['Wave', 1486, 590, 50, 14], ['Wave', 1486, 830, 40, 14], ['Graph', 1340, 905, 90, 75]
];
document.getElementById('doodles').innerHTML = doodles.map(([k, x, y, w, h]) =>
  `<use href="#d${k}" x="${x}" y="${y}" width="${w}" height="${h}"/>`).join('');

// Column kinds: k primary key, r foreign primary key, f not null, o nullable, p nullable foreign key.
const glyph = (kind, x, y) => {
  if (kind === 'k' || kind === 'r') {
    const c = kind === 'k' ? '#f0c419' : '#dd4b3a';
    return `<path d="M${x - 2.5} ${y - 4.5}h5v4.500l-1.500 1v3l-1 1-1-1v-3l-1.500-1z" fill="${c}"/>`;
  }
  const [fill, stroke] = { f: ['#56e0e6', '#7fb9c0'], o: ['#fff', '#86bcc2'], p: ['#fff', '#d09a9a'] }[kind];
  return `<path d="M${x} ${y - 3.7}l3.700 3.700-3.700 3.700-3.700-3.700z" fill="${fill}" stroke="${stroke}" stroke-width="1.300"/>`;
};

const label = (x, y, end, size, text, cls) =>
  `<text x="${x}" y="${y}" class="${cls}" font-size="${size}" textLength="${end - x}" lengthAdjust="spacingAndGlyphs">${text}</text>`;

function table(t, m) {
  const [name, x1, y1, x2, y2, tx, tEnd, rx, rows] = t;
  const w = x2 - x1, body = rows.length * m.pitch - 1.5, idx = y1 + m.head + body;
  let s = `<rect x="${x1}" y="${y1}" width="${w}" height="${y2 - y1}" rx="6" fill="#98bed6" stroke="#a0a6aa" stroke-width="1.500"/>`;
  s += `<rect x="${x1 + .8}" y="${y1 + m.head}" width="${w - 1.6}" height="${body}" fill="#fff"/>`;
  s += `<rect x="${x1 + .8}" y="${idx}" width="${w - 1.6}" height="${m.idx}" fill="#c1c1c1"/>`;
  s += `<rect x="${x1 + 6.5}" y="${y1 + m.ic}" width="14" height="${m.icH}" fill="url(#gCell)" stroke="#5a78b8"/><path d="M${x1 + 6} ${y1 + m.ic}h15" stroke="#4a55d8" stroke-width="2"/>`;
  s += label(tx, y1 + m.tb, tEnd, m.size + .5, name, 'tn');
  s += `<path d="M${x2 - 17} ${y1 + m.head / 2 - 4}h9l-4.500 8z" fill="#5f6467"/>`;
  rows.forEach(([kind, text, end], i) => {
    const cy = y1 + m.first + i * m.pitch;
    s += glyph(kind, rx - 7.5, cy) + label(rx, cy + m.size * .36, end, m.size, text, 'tr');
  });
  s += label(x1 + 6.5, idx + m.idx / 2 + m.size * .36, x1 + 6.5 + m.ixw, m.size, 'Indexes', 'ti');
  s += `<path d="M${x2 - 17} ${idx + m.idx / 2 - 4}l8 4-8 4z" fill="#5f6467"/>`;
  return s;
}

// End markers; (dx, dy) points away from the table edge.
const one = (x, y, dx, dy) => [5, 9].map(d =>
  `M${x + dx * d - dy * 4.5} ${y + dy * d - dx * 4.5}L${x + dx * d + dy * 4.5} ${y + dy * d + dx * 4.5}`).join('');
const many = (x, y, dx, dy) =>
  `M${x + dx * 12 - dy * 5} ${y + dy * 12 - dx * 5}L${x + dx * 12 + dy * 5} ${y + dy * 12 + dx * 5}` +
  `M${x - dy * 5} ${y - dx * 5}L${x + dx * 11} ${y + dy * 11}L${x + dy * 5} ${y + dx * 5}`;

function grid(x0, y0, x1, y1, mx, my, px, py) {
  let minor = '', major = '';
  for (let i = -120; i < 120; i++) {
    const x = mx + i * px / 8, y = my + i * py / 8;
    if (x > x0 && x < x1) { const d = `M${x.toFixed(1)} ${y0}V${y1}`; i % 8 ? minor += d : major += d; }
    if (y > y0 && y < y1) { const d = `M${x0} ${y.toFixed(1)}H${x1}`; i % 8 ? minor += d : major += d; }
  }
  return `<rect x="${x0}" y="${y0}" width="${x1 - x0}" height="${y1 - y0}" fill="#fff"/><path d="${minor}" stroke="#f2f2f2"/><path d="${major}" stroke="#e4e4e4"/>`;
}

function draw(id, g, lines, marks, tables, m) {
  document.getElementById(id).innerHTML = grid(...g) +
    lines.map(([d, dash]) => `<path d="${d}" fill="none" stroke="#666" stroke-width="1.200" ${dash ? `stroke-dasharray="${dash}"` : ''}/>`).join('') +
    `<path d="${marks.join('')}" fill="none" stroke="#555" stroke-width="1.100"/>` +
    tables.map(t => table(t, m)).join('');
}

draw('er1', [507, 283, 1486, 921, 808.5, 355.1, 83.6, 76.3], [
  ['M895 381H649.300V494'], ['M649.300 586V650'], ['M1084 381H1183.500V453.200H1283'],
  ['M990 448V661', '9 4'], ['M1363.800 500V561H1339.700V622'], ['M1208 678.600H1136V769H1065', '9 4']
], [one(895, 381, -1, 0), one(1084, 381, 1, 0), one(990, 448, 0, 1), one(649.3, 650, 0, -1), one(1339.7, 622, 0, -1), one(1208, 678.6, -1, 0),
  many(649.3, 494, 0, -1), many(649.3, 586, 0, 1), many(1283, 453.2, -1, 0), many(1363.8, 500, 0, 1), many(990, 661, 0, -1), many(1065, 769, 1, 0)
], [
  ['forwarders', 895, 314, 1084.5, 448, 923, 992, 912, [['k', 'ForwarderID INT', 998], ['f', 'ForwarderName VARCHAR(30)', 1068], ['o', 'ForwarderAddress VARCHAR(70)', 1078.5], ['o', 'BusinessNumber VARCHAR(10)', 1071]]],
  ['forwardersoffices', 1283, 408, 1446.5, 500, 1311, 1422, 1299.5, [['r', 'ForwarderID INT', 1386], ['r', 'PointOfEntryExitID INT', 1417]]],
  ['businesses2forwarder', 553.5, 494.5, 745, 586, 581.5, 721, 570.5, [['r', 'ForwarderID INT', 656.5], ['r', 'BusinessID INT', 650.5]]],
  ['businesses', 560, 650, 740.5, 784, 587, 656, 576.5, [['k', 'BusinessID INT', 655], ['o', 'BusinessName VARCHAR(70)', 724.5], ['o', 'BusinessAddress VARCHAR(70)', 735], ['o', 'BusinessNumber VARCHAR(10)', 735.5]]],
  ['users', 915.5, 661, 1064.5, 878.5, 943.5, 976.5, 932, [['k', 'UserID INT', 990], ['f', 'UserName VARCHAR(15)', 1059.5], ['f', 'Email VARCHAR(30)', 1034.5], ['o', 'City VARCHAR(20)', 1026], ['o', 'Address VARCHAR(70)', 1047], ['f', 'IsAgent TINYINT(1)', 1034.5], ['p', 'ForwarderID INT', 1018], ['p', 'PointOfEntryExitID INT', 1049.5]]],
  ['pointofentryexit_29', 1208, 622.5, 1472.5, 735, 1236, 1362.5, 1224.5, [['k', 'PointOfEntryExitID INT', 1342], ['o', 'Customs_clearance_office_code VARCHAR(5)', 1455], ['o', 'Customs_Clearance_office_name VARCHAR(70)', 1466.5]]]
], { head: 23.3, pitch: 21, first: 33.2, idx: 20.5, ic: 5.5, icH: 12, tb: 16.5, size: 11, ixw: 45 });

draw('er2', [1001, 1464, 1836, 1967, 1075, 1483.6, 72.2, 62], [
  ['M1314 1556H1171V1614'], ['M1171 1688V1726H1094V1763'], ['M1478 1556H1614.700V1608'],
  ['M1396 1611V1689H1397V1766', '7 4'], ['M1614.700 1683V1718H1738.300V1754'], ['M1658 1799H1559V1854H1461', '8 4']
], [one(1314, 1556, -1, 0), one(1478, 1556, 1, 0), one(1396, 1611, 0, 1), one(1094, 1763, 0, -1), one(1738.3, 1754, 0, -1), one(1657, 1799, -1, 0),
  many(1171, 1614, 0, -1), many(1171, 1688, 0, 1), many(1614.7, 1608, 0, -1), many(1614.7, 1683, 0, 1), many(1397, 1766, 0, -1), many(1461, 1854, 1, 0)
], [
  ['forwarders', 1314, 1503, 1477.5, 1611, 1337.5, 1397.5, 1328.5, [['k', 'ForwarderID INT', 1402.5], ['f', 'ForwarderName VARCHAR(30)', 1463], ['o', 'ForwarderAddress VARCHAR(70)', 1472], ['o', 'BusinessNumber VARCHAR(10)', 1466]]],
  ['forwarder_businesses', 1089, 1614, 1254, 1688, 1112.5, 1233, 1103, [['r', 'ForwarderID INT', 1177], ['r', 'BusinessID INT', 1171]]],
  ['businesses', 1017, 1763, 1173, 1871.5, 1040.5, 1099.5, 1031.5, [['k', 'BusinessID INT', 1098.5], ['o', 'BusinessName VARCHAR(70)', 1159], ['o', 'BusinessAddress VARCHAR(70)', 1167.5], ['o', 'BusinessNumber VARCHAR(10)', 1168.5]]],
  ['users', 1332, 1766, 1461, 1943, 1355.5, 1385, 1346.5, [['k', 'UserID INT', 1396], ['f', 'UserName VARCHAR(15)', 1456.5], ['f', 'Email VARCHAR(30)', 1434.5], ['o', 'City VARCHAR(20)', 1427.5], ['o', 'Address VARCHAR(70)', 1446], ['f', 'IsAgent TINYINT(1)', 1434.5], ['p', 'ForwarderID INT', 1421], ['p', 'PointOfEntryExitID INT', 1447.5]]],
  ['forwardersoffices', 1545, 1608, 1686, 1683, 1569, 1665, 1559.5, [['r', 'ForwarderID INT', 1633.5], ['r', 'PointOfEntryExitID INT', 1660.5]]],
  ['pointofentryexit_29', 1658, 1753.5, 1820, 1845.5, 1681.5, 1791.5, 1672.5, [['k', 'PointOfEntryExitID INT', 1773.5], ['o', 'OfficeNumber VARCHAR(5)', 1791.5], ['o', 'OfficeName_Place VARCHAR(70)', 1816]]]
], { head: 18.5, pitch: 17.05, first: 26.8, idx: 17, ic: 4, icH: 10, tb: 13.5, size: 9, ixw: 39 });

document.getElementById('er2').insertAdjacentHTML('beforeend', '<path d="M1001 1464h3v503h-3z" fill="#e3e3e3"/><path d="M1001 1464h2v13h-2z" fill="#c5d7ea"/>');
```
FILE: styles.css
```css
* { box-sizing: border-box; margin: 0; padding: 0; }
body { width: 1920px; height: 2160px; overflow: hidden; background: #303030; font-family: "Lato", sans-serif; font-weight: 400; }
.grads { position: absolute; width: 0; height: 0; }
.defs { display: none; }
.s { font-family: "Open Sans", sans-serif; }
.b { font-family: "Open Sans", sans-serif; font-weight: 700; }
.l { fill: none; stroke: currentColor; stroke-width: 1.8; }
.l.h { stroke-width: 3; }
i { display: flex; align-items: center; justify-content: center; flex: none; }
i svg { width: 16px; height: 16px; display: block; }
p, h1, h2, h3, [data-w] { white-space: nowrap; }

.screen { height: 1080px; display: flex; flex-direction: column; }

/* Tab strip */
.tabs { height: 40px; flex: none; background: #d3e3fd; display: flex; align-items: flex-end; padding-left: 6px; font-size: 12px; color: #1f1f1f; }
.tablist { width: 28px; height: 28px; margin: 0 6px 6px 0; border-radius: 10px; background: #ebf2fe; display: flex; align-items: center; justify-content: center; }
.tablist svg { width: 12px; height: 12px; stroke-width: 3; }
.tab { width: 232px; height: 34px; display: flex; align-items: center; padding: 0 9px 5px 9px; }
.tab.active { background: #fff; border-radius: 10px 10px 0 0; }
.tab:not(.active) { padding: 0 4px 5px 15px; color: #474747; }
.gmicon svg { width: 15px; height: 12px; }
.globe svg { width: 14px; height: 14px; }
.tabname { flex: 1; margin-left: 8px; }
.fade { -webkit-mask-image: linear-gradient(90deg, #000 148px, rgba(0,0,0,.3) 168px); mask-image: linear-gradient(90deg, #000 148px, rgba(0,0,0,.3) 168px); }
.close { width: 14px; }
.close svg { width: 13px; height: 13px; }
.tabsep { width: 2px; height: 16px; margin: 0 9px 12px 8px; background: #a8c7fa; }
.newtab { height: 40px; }
.newtab svg { width: 14px; height: 14px; }
.winctl { margin-left: auto; display: flex; height: 40px; color: #000; }
.winctl i { width: 46px; }
.winctl svg { width: 12px; height: 12px; }

/* Toolbar */
.toolbar { height: 47px; flex: none; background: #fff; border-bottom: 1px solid #dcdfe4; display: flex; align-items: center; color: #474747; }
.nav { display: flex; width: 120px; padding-left: 4px; }
.nav i { width: 36px; }
.nav .off { color: #b4b4b4; }
.omni { width: 1310px; height: 34px; border-radius: 17px; background: #edf1fa; display: flex; align-items: center; padding-left: 5px; padding-right: 8px; }
.omni i { width: 33px; }
.omni .site { width: 24px; height: 24px; border-radius: 12px; background: #fff; display: flex; align-items: center; justify-content: center; margin-right: 8px; color: #333; }
.site svg { width: 13px; height: 13px; }
.url { flex: 1; font-size: 13.5px; color: #1f1f1f; }
.url b { font-weight: 400; color: #55585c; }
.exts { display: flex; padding-left: 8px; }
.exts i { width: 36px; }
.tsep { width: 2px; height: 16px; background: #d3e3fd; margin-left: 8px; }
.dl { width: 50px; margin-left: 1px; }
.dl svg { width: 18px; height: 18px; }
.pill { height: 34px; border-radius: 17px; background: #d3e3fd; display: flex; align-items: center; font-size: 12px; color: #25395c; }
.paused { width: 86px; margin-left: -3px; padding-left: 10px; gap: 7px; }
.pa { width: 20px; height: 20px; border-radius: 10px; background: #ea3b78; color: #fff; text-align: center; line-height: 20px; font-size: 11px; }
.finish { width: 110px; margin-left: 6px; padding-left: 11px; gap: 4px; }
.finish i svg { width: 15px; height: 15px; }

/* Mail backdrop and previewed page */
.view { height: 953px; flex: none; display: grid; grid-template-columns: 360px 1200px 360px; background: #303030; font-family: Roboto, sans-serif; color: #1f2020; }
.mail { overflow: hidden; background: linear-gradient(90deg, transparent 342px, #282828 360px); }
.mhead { height: 95px; display: flex; align-items: center; padding-left: 40px; }
.mhead i svg { width: 28px; height: 24px; }
.mhead .logo { margin: 0 18px 0 30px; opacity: .22; }
.mhead .logo svg { width: 44px; height: 33px; }
.gname { font-size: 33px; }
.mbody { display: flex; }
.rail { width: 110px; padding: 13px 2px 0 0; display: flex; flex-direction: column; align-items: center; color: #222; }
.compose { width: 82px; height: 84px; border-radius: 22px; background: #2b3237; display: flex; align-items: center; justify-content: center; margin-bottom: 24px; color: #1b1b1b; }
.compose svg { width: 28px; height: 28px; }
.rail > i svg { width: 24px; height: 24px; }
.rail > i { width: 48px; height: 48px; }
.rail .sent { border-radius: 24px; background: #2d3034; color: #1c1f24; }
.rail .more { margin-top: 33px; }
.rail .lab { margin-top: 8px; color: #1e3338; }
.card { width: 250px; height: 834px; border-radius: 22px 0 0 22px; background: rgba(0,0,0,.015); }
.acts { height: 74px; display: flex; align-items: center; padding-left: 28px; }
.acts svg { width: 20px; height: 20px; }
.acts i:nth-child(2) { margin-left: 63px; }
.acts i:nth-child(3) { margin-left: 46px; }
.acts i:nth-child(4) { margin-left: 42px; }
.card h1 { font-weight: 400; font-size: 31px; line-height: 100px; padding-left: 107px; letter-spacing: .2px; }
.from { display: flex; height: 62px; padding-left: 22px; gap: 25px; }
.av { width: 60px; height: 60px; border-radius: 50%; background: #24291b; color: #373a30; text-align: center; line-height: 58px; font-size: 29px; }
.from b { display: block; font-size: 20px; line-height: 24px; padding-top: 4px; height: 29px; font-weight: 700; }
.from p { display: flex; align-items: center; font-size: 18px; line-height: 30px; gap: 8px; }
.att { margin: 63px 0 0 107px; border-top: 1px solid #2b2b2b; }
.att h2 { font-size: 20px; line-height: 66px; padding-left: 4px; }
.thumb { height: 179px; border: 1px solid #2b2b2b; }
.tpage { height: 128px; padding: 24px 0 0 24px; font-size: 5.5px; line-height: 5.4px; overflow: hidden; }
.ek { display: block; width: 31px; height: 23px; margin: 0 0 4px 7px; }
.tpage b { display: block; font-size: 7px; line-height: 8px; margin-bottom: 5px; font-weight: 400; }
.tpage .to { margin: 12px 0 7px; }
.nm { display: grid; grid-template-columns: 48px 80px; line-height: 7px; font-weight: 700; }
.file { height: 50px; background: #2e2e2e; display: flex; align-items: center; font-size: 20px; gap: 12px; padding: 0 0 4px 12px; white-space: nowrap; font-weight: 500; }
.file span { flex: none; width: 24px; height: 24px; border-radius: 3px; background: #471f1e; color: #5e3936; font-size: 9px; font-weight: 700; line-height: 24px; text-align: center; }
.second { margin-top: 85px; }
.quote { font-size: 20px; line-height: 30px; padding: 68px 0 0 107px; }

.sheet { background: #fff; position: relative; overflow: hidden; font-family: Lato, sans-serif; color: #111; }
.art, .er { position: absolute; left: 0; top: 0; }
.er { left: 147px; top: 196px; }
.ptext { position: relative; margin-top: -28px; font-size: 26.500px; }
.row { display: grid; grid-template-columns: 218px 1fr; padding-left: 108px; height: 31px; line-height: 30px; }
.row b { font-size: 26.300px; }
.last { margin-top: 3px; }
.intro { margin: 63px 0 0 145px; font-size: 26.700px; line-height: 31.500px; }
.slogan { position: absolute; left: 297px; top: 914px; font: 600 23px/28px "Noto Sans", sans-serif; color: #1e2433; }

.side { background: linear-gradient(270deg, transparent 342px, #282828 360px); }
.side svg { width: 24px; height: 24px; }
.stop { height: 95px; display: grid; grid-template-columns: 66px 66px 66px 78px; padding-left: 72px; align-items: center; justify-items: center; }
.stop i svg { width: 30px; height: 30px; }
.stop i:nth-child(3) svg { width: 24px; height: 22px; }
.stop span { width: 48px; height: 48px; border-radius: 24px; background: #251f2c; color: #3a353f; font-size: 26px; line-height: 48px; text-align: center; }
.sgrid { display: grid; grid-template-columns: 259px 17px 66px 12px; height: 858px; }
.smain { display: flex; flex-direction: column; }
.r1 { height: 74px; display: grid; grid-template-columns: 81px 60px 60px; padding-left: 42px; align-items: center; font-size: 18px; color: #232323; }
.r1 svg { width: 20px; height: 20px; }
.r2 { height: 100px; display: flex; padding-left: 78px; }
.r2 i { width: 54px; }
.r3 { height: 32px; display: flex; padding-left: 3px; }
.r3 i { width: 60px; }
.r4 { height: 250px; padding: 0 33px 0 0; display: flex; justify-content: flex-end; }
.low { margin-top: 174px; }
.gold { color: #332b1a; }
.sbar { background: #2b2b2b; height: 439px; margin-top: 73px; }
.apps { display: flex; flex-direction: column; padding-top: 1px; }
.apps i { width: 84px; height: 84px; }
.apps i svg { width: 27px; height: 27px; }
.apps .ap { margin-top: 49px; color: #1c1c1c; }
.apps .ar { margin-top: 304px; color: #151515; }
.apps .ar svg { width: 20px; height: 20px; }
.thumbbar { width: 12px; height: 72px; border-radius: 6px; background: #454746; margin-top: 22px; }

/* Taskbars */
.task { display: flex; color: #fff; }
.t1 { height: 40px; background: #1b1b1b; }
.run { display: flex; }
.t1 > span:not(.run), .t1 .app { width: 49px; height: 40px; display: flex; align-items: center; justify-content: center; }
.t1 svg { width: 24px; height: 24px; }
.t1 > span:first-child svg { width: 19px; height: 19px; }
.t1 > span:nth-child(2) svg { width: 22px; margin-right: 3px; }
.app-chrome { background: rgba(255,255,255,.2); border-bottom: 2px solid #76b9ed; padding-top: 2px; }
.app-word { background: linear-gradient(90deg, #76b9ed 80%, #5585ab 80%) center bottom / 40px 2px no-repeat; }
.t2 .app-word { background-size: 51px 3px; }
.clk { text-align: center; }
.t1 .clk { margin-left: auto; width: 64px; font-size: 11px; line-height: 18px; padding-top: 2px; }
.t2 { height: 50px; background: linear-gradient(90deg, #20343e, #22353f 55%, #1d2843 90%); }
.start { width: 60px; display: flex; align-items: center; justify-content: center; }
.start svg { width: 24px; height: 24px; }
.find { width: 360px; background: #f2f2f2; border: 1px solid #b5b9bb; display: flex; align-items: center; color: #333; font-size: 18px; padding-left: 13px; }
.find > i svg { width: 22px; height: 22px; }
.find > span { margin-left: 14px; width: 214px; }
.hill { width: 94px; height: 43px; align-self: flex-end; }
.t2 .run { padding-left: 3px; }
.t2 .app { width: 62px; height: 50px; display: flex; align-items: center; justify-content: center; }
.t2 .app svg { width: 30px; height: 30px; }
.tray { display: flex; margin-left: 137px; align-items: center; }
.tray i { width: 30.500px; }
.tray i svg { width: 19px; height: 19px; }
.tray .we svg { width: 31px; height: 28px; }
.deg { font-size: 17px; margin: 0 22px 0 11px; width: 35px; }
.t2 .clk { width: 80px; margin-left: 1px; font-size: 14px; line-height: 23px; }
.tray .no { width: 50px; }
.tray .no svg { width: 21px; height: 21px; }

/* Word windows */
.words { display: flex; height: 1030px; }
.window { width: 960px; display: flex; flex-direction: column; border: 1px solid #7d7d7d; background: #e6e6e6; }
.wtitle { height: 38px; flex: none; background: #2b579a; color: #fff; display: grid; grid-template-rows: 38px; grid-template-columns: 66px 40px 8px 62px 52px 60px 54px 263px 116px 74px 40px 74px 40px; align-items: center; }
.wtitle i svg { width: 17px; height: 17px; }
.wtitle .sm svg { width: 9px; height: 9px; }
.wtitle .big svg { width: 20px; height: 21px; }
.wtitle .name { padding-left: 12px; font-size: 14px; color: #a8bbd8; padding-top: 4px; position: relative; z-index: 1; }
.wtitle .dim { color: #7f9ac6; }
.dim { color: #8aa3ca; }
.faint { color: #6c8bbd; }
.tt { align-self: stretch; background: #204376; color: #b6c6de; font-size: 12.500px; line-height: 38px; padding: 3px 0 0 25px; overflow: hidden; }
.wtabs { height: 40px; flex: none; background: #2b579a; color: #f2f5fa; display: grid; font-size: 13.500px; padding-left: 25px; line-height: 36px; }
.wtabs > i { height: 38px; }
.wtabs i svg { width: 18px; height: 19px; }
.wtabs.one { grid-template-columns: 63px 66px 61px 70px 68px 97px 79px 71px 56px 71px 25px 60px 54px 92px; }
.wtabs.two { grid-template-columns: 56px 52px 47px 57px 55px 83px 67px 58px 43px 62px 59px 57px 31px 60px 54px 92px; }
.wtabs.two > span:nth-child(n+2):nth-child(-n+10) { background: linear-gradient(#e8edf5, #e8edf5) right 5px top 6px / 1px 23px no-repeat; }
.wtabs.two > span:nth-child(10) { background-position: right 3px top 6px; }
.wtabs .tt2 { background: linear-gradient(#a9bbd6, #a9bbd6) right 0 top 6px / 1px 23px no-repeat, #204376; height: 34px; padding-left: 6px; }
.wtabs.two > i { padding-left: 8px; }
.share { background: #124078; height: 29px; line-height: 28px; margin-top: 3px; display: flex; align-items: center; gap: 5px; padding-left: 8px; }
.share i { width: 18px; }
.wdoc { height: 902px; flex: none; overflow: hidden; }
.gap { padding-top: 21px; }
.paper { width: 912px; height: 100%; background: #fff; border-right: 1px solid #c6c6c6; overflow: hidden; }
.gap .paper { border-top: 1px solid #c6c6c6; }
.left { font-family: Lato, sans-serif; font-size: 16.200px; color: #000; }
.g { color: #00b050; }
.it { display: grid; grid-template-columns: 30px 1fr; padding-left: 40px; line-height: 24.300px; }
.first { margin-top: 118px; }
.second.it { margin-top: 75px; }
.third { margin-top: 23px; }
.arrow { width: 16px; height: 14px; vertical-align: -1px; }
.mom { display: flex; justify-content: space-between; width: 716px; height: 33px; margin: 34px 0 0 59px; padding: 0 8px 0 19px; border-bottom: 3px solid #b3b3b3; }
.dm { font: 400 16.500px/27px "Noto Sans", sans-serif; color: #d98b90; }
.ekc { font-size: 18.500px; line-height: 36px; color: #777; }
.sub { display: grid; grid-template-columns: 29px 562px; padding-left: 119px; line-height: 32.750px; font-size: 16px; margin-top: -5px; }
.j { text-align: justify; text-align-last: justify; width: 562px; letter-spacing: -.1px; }
.fourth { margin-top: 41px; }
u { text-decoration: none; }
.sq { text-decoration: underline wavy #e33 1px; text-underline-offset: 2px; text-decoration-skip-ink: none; }
.bl { text-decoration-color: #44e; }
h3 { font: 700 27px/30px Lato, sans-serif; color: #2f5597; margin: 4px 0 0 88px; }
.serif { font: 400 19px/23.500px "Liberation Serif", serif; color: #000; margin: 64px 0 0 40px; }
.sp { margin-top: 22px; }
.er2 { display: block; margin: 67px 0 0 40px; }
.act { color: #bdbdbd; margin: 38px 0 0 593px; line-height: 28px; font-size: 18px; }
.act p:first-child { font-size: 25px; line-height: 30px; }
.status { height: 27px; margin-top: auto; background: #f1f1f1; border-top: 2px solid #c6c6c6; display: flex; align-items: center; font-size: 12px; color: #555; padding: 0 0 1px 7px; gap: 19px; }
.status > span { position: relative; top: -1px; }
.status i svg { width: 17px; height: 15px; }
.views { margin-left: auto; display: flex; align-items: center; height: 100%; }
.views i { width: 41px; height: 100%; }
.views .on { background: #c8c8c8; }
.views .zm { width: 20px; }
.views .zm svg { width: 12px; }
.slider { width: 125px; height: 15px; background: linear-gradient(#666, #666) 60px 0 / 5px 15px no-repeat, linear-gradient(#a6a6a6, #a6a6a6) 0 7px / 125px 1px no-repeat; }
.pc { width: 64px; padding-left: 11px; }

/* Diagram lettering */
.tn, .tr, .ti { font-family: "DejaVu Sans", sans-serif; }
.tn { font-weight: 700; fill: #111; }
.tr { fill: #222; }
.ti { font-weight: 700; fill: #fff; }
```
